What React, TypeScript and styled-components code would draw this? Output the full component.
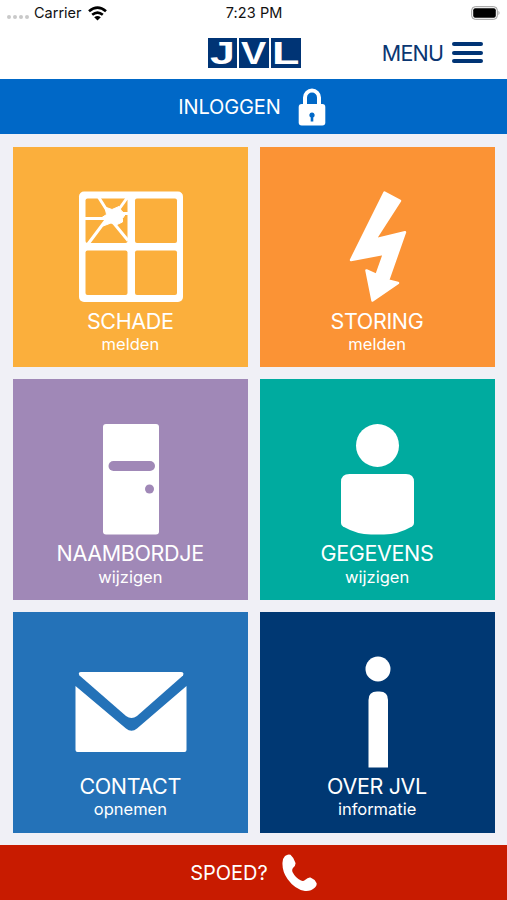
import React from "react";
import styled, { createGlobalStyle } from "styled-components";

const GlobalStyle = createGlobalStyle`
  * { box-sizing: border-box; }
  body { margin: 0; background: #f0f0f6; font-family: Inter, "Liberation Sans", sans-serif; }
`;

const Screen = styled.div`
  width: 507px;
  height: 900px;
  display: flex;
  flex-direction: column;
  overflow: hidden;
  background: #f0f0f6;
`;

const StatusBar = styled.div`
  height: 26px;
  flex: none;
  display: grid;
  grid-template-columns: 1fr auto 1fr;
  align-items: center;
  padding: 0 6px 0 7px;
  background: #fff;
  color: #111;
  font-size: 14.5px;
  line-height: 26px;
`;

const Carrier = styled.div`
  display: flex;
  align-items: center;
  gap: 6px;
`;

const Signal = styled.div`
  display: flex;
  gap: 2px;
  padding-top: 8px;
  margin-right: -1px;
`;

const SignalDot = styled.i`
  width: 4px;
  height: 4px;
  border-radius: 50%;
  background: #c9c9c9;
`;

const Fit = styled.span<{ $spacing?: number }>`
  letter-spacing: ${(p) => p.$spacing ?? 0}px;
  margin-right: ${(p) => -(p.$spacing ?? 0)}px;
  white-space: nowrap;
`;

const BatterySlot = styled.div`
  display: flex;
  justify-content: flex-end;
`;

const Header = styled.header`
  height: 53px;
  flex: none;
  display: grid;
  grid-template-columns: 1fr 93px 1fr;
  align-items: center;
  background: #fff;
`;

const Logo = styled.div`
  display: grid;
  grid-template-columns: repeat(3, 1fr);
  gap: 2.5px;
  margin: 0 -0.5px 0 0.5px;
`;

const LogoCell = styled.div`
  height: 30px;
  display: flex;
  align-items: center;
  justify-content: center;
  background: #003475;
  color: #fff;
`;

const LogoLetter = styled.span<{ $stretch: number; $shift: number }>`
  font: 700 32px/30px "Liberation Sans", Arial, sans-serif;
  transform: translateX(${(p) => p.$shift}px) scaleX(${(p) => p.$stretch});
`;

const Menu = styled.button`
  display: flex;
  align-items: center;
  justify-content: flex-end;
  gap: 8px;
  padding: 0 24px 0 0;
  border: 0;
  background: none;
  color: #0a3672;
  font: 400 21.5px/28px Inter, sans-serif;
`;

const Burger = styled.span`
  width: 31px;
  display: grid;
  gap: 4.5px;
`;

const BurgerLine = styled.i`
  height: 4px;
  border-radius: 2px;
  background: #003475;
`;

const ActionBar = styled.button<{ $color: string; $gap: number }>`
  flex: none;
  height: 55px;
  display: flex;
  align-items: center;
  justify-content: center;
  gap: ${(p) => p.$gap}px;
  padding: 0;
  border: 0;
  background: ${(p) => p.$color};
  color: #fff;
  font: 400 20px/24px Inter, sans-serif;
`;

const LockIcon = styled.svg`
  margin-right: 3px;
`;

const Tiles = styled.main`
  flex: 1;
  display: grid;
  grid-template-columns: 1fr 1fr;
  grid-template-rows: repeat(3, 1fr);
  gap: 12px;
  padding: 12.6px 12.5px 12.2px 13px;
`;

const Tile = styled.button<{ $color: string }>`
  display: flex;
  flex-direction: column;
  align-items: center;
  padding: 44px 0 0;
  border: 0;
  background: ${(p) => p.$color};
  color: #fff;
  font-family: Inter, sans-serif;
`;

const TileIcon = styled.svg`
  display: block;
  width: 120px;
  height: 112px;
  fill: #fff;
`;

const Title = styled.span`
  font-size: 21.5px;
  line-height: 26px;
  margin-top: 5px;
`;

const Subtitle = styled.span`
  font-size: 16.5px;
  line-height: 20px;
  margin-top: 0.3px;
`;

const Window = () => (
  <TileIcon viewBox="70 191 120 112">
    <rect x="79" y="191.5" width="104" height="110.5" rx="5" />
    <g fill="#fbaf3c">
      <rect x="85.5" y="198.5" width="42" height="44.5" rx="2" />
      <rect x="135" y="198.5" width="42" height="44.5" rx="2" />
      <rect x="85.5" y="250.5" width="42" height="44.5" rx="2" />
      <rect x="135" y="250.5" width="42" height="44.5" rx="2" />
    </g>
    <path
      fill="none"
      stroke="#fff"
      strokeWidth="3"
      d="M98.500 197L108 212M127 198L117 212M85 218.500H106M88 244L106 220M128 240.500L112 221M128 213.500H117"
    />
    <path
      stroke="#fff"
      strokeLinejoin="round"
      d="M102 217.500L106.500 214.500 105 207 112 209.500 119 206.500 121.500 211 125.500 214 122.500 218.500 122.500 222 116 225 111 223 103 226 105 220.500Z"
    />
  </TileIcon>
);

const Bolt = () => (
  <TileIcon viewBox="317 191 120 112">
    <path
      stroke="#fff"
      strokeWidth="2.5"
      strokeLinejoin="round"
      d="M384.500 192.500L400 200.800 375 239.500 405 232.200 388 280.500 398 283 372.500 300.500 366.500 270.500 376.500 275 384 253.800 351 260Z"
    />
  </TileIcon>
);

const Door = () => (
  <TileIcon viewBox="70 423 120 112">
    <rect x="103" y="424" width="56" height="110.500" rx="3" />
    <rect x="108.500" y="461" width="46.500" height="10" rx="5" fill="#a088b7" />
    <circle cx="149.500" cy="489" r="4.500" fill="#a088b7" />
  </TileIcon>
);

const Person = () => (
  <TileIcon viewBox="317.500 423 120 112">
    <circle cx="378" cy="445.500" r="21.500" />
    <path d="M350 474h56.500q8 0 8 8v41q0 2-2 3.500-14 8-28 8h-13q-14 0-28-8-2-1.500-2-3.500V482q0-8 8.500-8z" />
  </TileIcon>
);

const Envelope = () => (
  <TileIcon viewBox="70 656 120 112">
    <path d="M81 672h100q3.500 0 2 3.500L137 716q-5.500 4-11 0L79.500 675.500Q77.500 672 81 672z" />
    <path d="M75.500 686L126 728.500q5.500 4.500 11 0L186.500 686v64q0 2-2 2H77.500q-2 0-2-2z" />
  </TileIcon>
);

const Info = () => (
  <TileIcon viewBox="317 656 120 112">
    <circle cx="378" cy="669" r="12.500" />
    <path d="M368.500 767.500V700q0-8.500 8.500-8.500h2.500q8.500 0 8.500 8.500v67.500z" />
  </TileIcon>
);

const tiles = [
  { title: "SCHADE", sub: "melden", color: "#fbaf3c", icon: Window },
  { title: "STORING", sub: "melden", color: "#fb9335", icon: Bolt },
  { title: "NAAMBORDJE", sub: "wijzigen", color: "#a088b7", icon: Door },
  { title: "GEGEVENS", sub: "wijzigen", color: "#00ab9f", icon: Person },
  { title: "CONTACT", sub: "opnemen", color: "#2472b8", icon: Envelope },
  { title: "OVER JVL", sub: "informatie", color: "#003873", icon: Info },
];

export default function App() {
  return (
    <>
      <GlobalStyle />
      <Screen>
        <StatusBar>
          <Carrier>
            <Signal>
              <SignalDot /><SignalDot /><SignalDot /><SignalDot />
            </Signal>
            <Fit>Carrier</Fit>
            <svg width="19" height="15" viewBox="0 0 19 15" fill="none" stroke="#000" strokeWidth="2.600">
              <path d="M1 5.300Q9.500-2.200 18 5.300M4.200 8.800q5.300-4.400 10.600 0" />
              <path d="M9.500 14.500l-3.300-3.300q3.300-2.400 6.600 0z" fill="#000" stroke="none" />
            </svg>
          </Carrier>
          <Fit $spacing={0.1}>7:23 PM</Fit>
          <BatterySlot>
            <svg width="30" height="14" viewBox="0 0 30 14">
              <rect x=".7" y=".7" width="25.600" height="12.600" rx="3.500" fill="#fff" stroke="#999" />
              <rect x="2.200" y="2.200" width="22.600" height="9.600" rx="2" />
              <path d="M27.500 4.800q2 2.200 0 4.400z" fill="#999" />
            </svg>
          </BatterySlot>
        </StatusBar>
        <Header>
          <span />
          <Logo>
            <LogoCell><LogoLetter $stretch={1.4} $shift={0.5}>J</LogoLetter></LogoCell>
            <LogoCell><LogoLetter $stretch={1.18} $shift={0}>V</LogoLetter></LogoCell>
            <LogoCell><LogoLetter $stretch={1.4} $shift={0}>L</LogoLetter></LogoCell>
          </Logo>
          <Menu>
            <Fit $spacing={-0.8}>MENU</Fit>
            <Burger><BurgerLine /><BurgerLine /><BurgerLine /></Burger>
          </Menu>
        </Header>
        <ActionBar $color="#0068c7" $gap={17}>
          <Fit $spacing={-0.1}>INLOGGEN</Fit>
          <LockIcon width="28" height="38" viewBox="0 0 28 38">
            <path d="M7 18V9.500a7 7 0 0 1 14 0V18" fill="none" stroke="#fff" strokeWidth="4" />
            <rect x=".7" y="16" width="26.600" height="21.500" rx="3" fill="#fff" />
            <path d="M14 24.500a2.600 2.600 0 0 1 1.300 4.900v4h-2.600v-4A2.600 2.600 0 0 1 14 24.500z" fill="#0068c7" />
          </LockIcon>
        </ActionBar>
        <Tiles>
          {tiles.map(({ title, sub, color, icon: Icon }) => (
            <Tile key={title} $color={color}>
              <Icon />
              <Title><Fit $spacing={-0.35}>{title}</Fit></Title>
              <Subtitle><Fit>{sub}</Fit></Subtitle>
            </Tile>
          ))}
        </Tiles>
        <ActionBar $color="#c81b00" $gap={13}>
          <Fit>SPOED?</Fit>
          <svg width="36" height="38" viewBox="0 0 36 38" fill="#fff">
            <path d="M4 2Q7-.3 9.500.8q3.500 3 5 8.200.3 2.500-2.500 5-1.300 1.500-.5 4 3 6 8.500 8.500 2.300 1 4-.5 3-3 5.500-2.500 4 1.500 6 5.500.8 2-1.500 4.500-4.500 4.200-10 3.500-10-1.500-17.500-12-5.500-8-5-16.500Q1.500 4.500 4 2z" />
          </svg>
        </ActionBar>
      </Screen>
    </>
  );
}
